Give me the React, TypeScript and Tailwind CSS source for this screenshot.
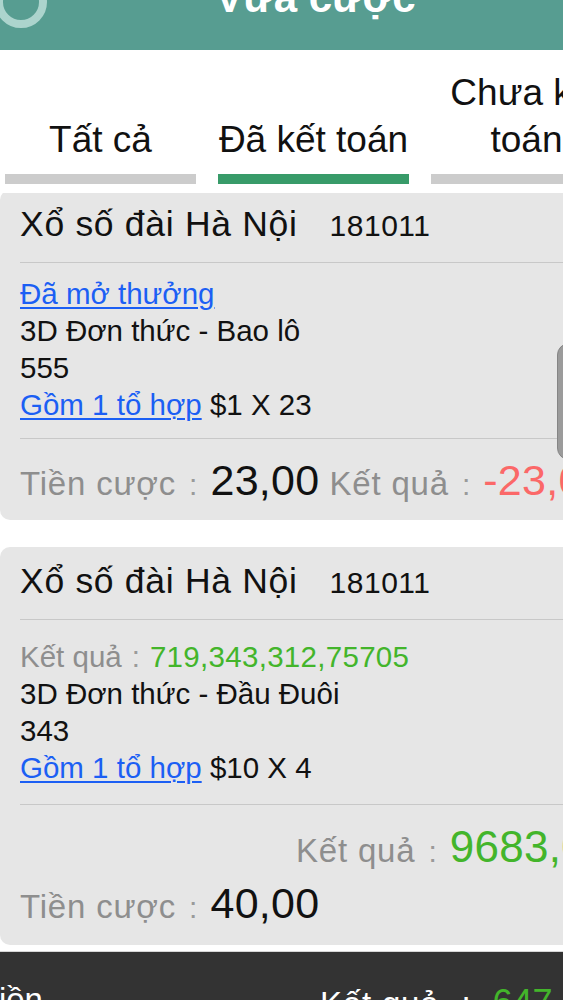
import * as React from 'react';

const Divider = () => <div className="ml-[20px] h-px bg-[#c8c8c8]" />;

const Link = ({ children }: { children: React.ReactNode }) => (
  <span className="text-[#1c5ff4] underline decoration-[1.5px] underline-offset-[3px]">{children}</span>
);

const Title = () => (
  <div className="flex items-baseline px-[20px] pt-[17px] pb-[19.5px] leading-none">
    <span className="text-[35.5px] tracking-[0.7px] text-[#111]">Xổ số đài Hà Nội</span>
    <span className="ml-[32px] text-[30px] tracking-[0.5px] text-[#111]">181011</span>
  </div>
);

const Amount = ({ label, value, color, big }: { label: string; value: string; color: string; big?: boolean }) => (
  <>
    <span className="text-[33px] tracking-[0.8px] text-[#8e8e8e]">{label}</span>
    <span className="mx-[13px] text-[30px] text-[#9a9a9a]">:</span>
    <span className={`${big ? 'text-[44px]' : 'text-[43px]'} tracking-[0.3px] ${color}`}>{value}</span>
  </>
);

export default function App() {
  return (
    <div className="relative w-[563px] h-[1000px] overflow-hidden bg-white font-['Liberation_Sans',Arial,sans-serif]">
      {/* header */}
      <div className="relative h-[50px] overflow-hidden bg-[#579d91]">
        <div className="absolute left-[-5px] top-[-24px] w-[52px] h-[52px] rounded-full border-[8px] border-[#acd4cd]" />
        <div className="-mt-[23px] pl-[68px] text-center text-[42px] font-bold leading-none text-white">Vừa cược</div>
      </div>

      {/* tabs */}
      <div className="flex h-[143px] items-end gap-[22px] pl-[5px] pb-[9px]">
        {[
          { t: 'Tất cả', on: false },
          { t: 'Đã kết toán', on: true },
          { t: 'Chưa kết toán', on: false },
        ].map((tab) => (
          <div key={tab.t} className="flex w-[191px] shrink-0 flex-col items-center">
            <div className="text-center text-[37px] leading-[47px] text-[#111]">{tab.t}</div>
            <div className={`mt-[11px] h-[10px] w-full ${tab.on ? 'bg-[#389b69]' : 'bg-[#cccccc]'}`} />
          </div>
        ))}
      </div>

      {/* list */}
      <div className="h-[758px] overflow-hidden">
        <div className="-mt-[3px] flex flex-col gap-[27px]">
          <div className="w-[620px] rounded-[10px] bg-[#e6e6e6]">
            <Title />
            <Divider />
            <div className="px-[20px] pt-[12px] pb-[15px] text-[29.5px] leading-[37px] text-[#111]">
              <div><Link>Đã mở thưởng</Link></div>
              <div>3D Đơn thức - Bao lô</div>
              <div>555</div>
              <div><Link>Gồm 1 tổ hợp</Link> $1 X 23</div>
            </div>
            <Divider />
            <div className="flex items-baseline whitespace-nowrap px-[20px] pt-[20px] pb-[18px] leading-none">
              <Amount label="Tiền cược" value="23,00" color="text-[#111]" />
              <span className="ml-[10px]" />
              <Amount label="Kết quả" value="-23,00" color="text-[#fb6868]" />
            </div>
          </div>

          <div className="w-[620px] rounded-[10px] bg-[#e6e6e6]">
            <Title />
            <Divider />
            <div className="px-[20px] pt-[18px] pb-[18px] text-[29.5px] leading-[37px] text-[#111]">
              <div>
                <span className="text-[#8e8e8e]">Kết quả</span>
                <span className="mx-[10px] text-[#9a9a9a]">:</span>
                <span className="tracking-[0.3px] text-[#43b52b]">719,343,312,75705</span>
              </div>
              <div>3D Đơn thức - Đầu Đuôi</div>
              <div>343</div>
              <div><Link>Gồm 1 tổ hợp</Link> $10 X 4</div>
            </div>
            <Divider />
            <div className="flex flex-col gap-[13px] whitespace-nowrap px-[20px] pt-[20px] pb-[20px] leading-none">
              <div className="flex items-baseline pl-[276px]">
                <Amount label="Kết quả" value="9683,00" color="text-[#43b52b]" big />
              </div>
              <div className="flex items-baseline">
                <Amount label="Tiền cược" value="40,00" color="text-[#111]" />
              </div>
            </div>
          </div>
        </div>
      </div>

      {/* footer */}
      <div className="flex h-[100px] border-t border-[#d6d6d6] bg-[#333333] leading-none">
        <div className="w-[305px] shrink-0 -ml-[20px] pt-[28px]">
          <div className="w-[90px] text-[33px] leading-[40px] text-white">Tiền cược</div>
        </div>
        <div className="mt-[16px] ml-[20px] h-[70px] w-[2px] bg-[#7a7a7a]" />
        <div className="flex items-baseline whitespace-nowrap pl-[15px] pt-[33px] text-[33px] text-white">
          <span className="tracking-[0.8px]">Kết quả</span>
          <span className="mx-[22px]">:</span>
          <span className="text-[36px] text-[#43b52b]">647,00</span>
        </div>
      </div>

      {/* partially visible side handle */}
      <div className="absolute left-[557px] top-[343px] h-[117px] w-[30px] rounded-l-[12px] border border-[#858585] bg-[#9b9b9b]" />
    </div>
  );
}
